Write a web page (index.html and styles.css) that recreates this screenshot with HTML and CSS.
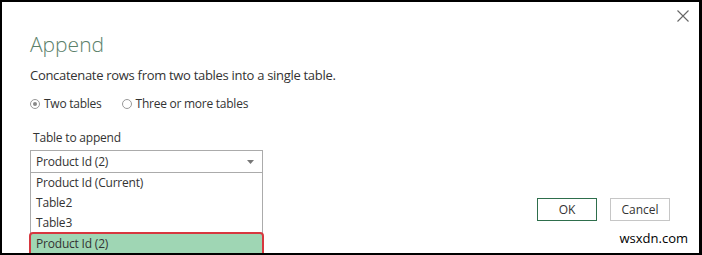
FILE: index.html
```html
<!DOCTYPE html>
<html lang="en">
<head>
    <meta charset="UTF-8">
    <title>Append</title>
    <link rel="stylesheet" href="styles.css">
</head>
<body>
    <div class="dialog">
        <button class="close" aria-label="Close">
            <svg width="12" height="12" viewBox="0 0 12 12"><path d="M0.5 0.5 L11.5 11.5 M11.5 0.5 L0.5 11.5" stroke="#666" stroke-width="1.1" fill="none"/></svg>
        </button>
        <h1 class="title">Append</h1>
        <p class="intro">Concatenate rows from two tables into a single table.</p>
        <div class="radios">
            <label class="radio"><span class="dot checked"></span>Two tables</label>
            <label class="radio"><span class="dot"></span>Three or more tables</label>
        </div>
        <div class="bottom">
            <div class="field">
                <div class="label">Table to append</div>
                <div class="select">
                    <span>Product Id (2)</span>
                    <svg width="7" height="4" viewBox="0 0 7 4"><path d="M0 0 H7 L3.5 4 Z" fill="#777"/></svg>
                </div>
                <ul class="options">
                    <li>Product Id (Current)</li>
                    <li>Table2</li>
                    <li>Table3</li>
                    <li class="picked">Product Id (2)</li>
                </ul>
            </div>
            <div class="actions">
                <div class="buttons">
                    <button class="btn primary">OK</button>
                    <button class="btn">Cancel</button>
                </div>
                <div class="mark">wsxdn.com</div>
            </div>
        </div>
    </div>
</body>
</html>
```

FILE: styles.css
```css
body {
    margin: 0;
    background-color: #000;
    font-family: "Open Sans", "Noto Sans", sans-serif;
    color: #333;
}
.dialog {
    position: relative;
    margin: 2px 3px 0 2px;
    height: 251px;
    background-color: #fff;
    overflow: hidden;
    padding: 0 0 0 28px;
    box-sizing: border-box;
}
.close {
    position: absolute;
    top: 8px;
    right: 10px;
    border: 0;
    background: none;
    padding: 0;
    line-height: 0;
}
.title {
    margin: 0;
    padding-top: 28px;
    font-size: 21px;
    font-weight: 300;
    color: #5b806a;
    line-height: 28px;
}
.intro {
    margin: 8px 0 0;
    font-size: 13px;
    line-height: 18px;
    letter-spacing: -0.3px;
}
.radios {
    display: flex;
    gap: 20px;
    margin-top: 12px;
    font-size: 12px;
    line-height: 16px;
    letter-spacing: -0.25px;
}
.radio {
    display: flex;
    align-items: center;
    gap: 4px;
}
.dot {
    width: 10px;
    height: 10px;
    border: 1px solid #999;
    border-radius: 50%;
    box-sizing: border-box;
    position: relative;
}
.dot.checked::after {
    content: "";
    position: absolute;
    left: 2px;
    top: 2px;
    width: 4px;
    height: 4px;
    border-radius: 50%;
    background-color: #888;
}
.bottom {
    display: flex;
    margin-top: 18px;
}
.field {
    width: 233px;
    font-size: 12px;
    letter-spacing: -0.2px;
}
.label {
    line-height: 16px;
    padding-left: 3px;
}
.select {
    margin-top: 4px;
    height: 21px;
    border: 1px solid #ababab;
    display: flex;
    align-items: center;
    justify-content: space-between;
    padding: 0 8px 0 5px;
}
.options {
    list-style: none;
    margin: 0;
    padding: 0;
    border: 1px solid #ababab;
    border-top: 0;
}
.options li {
    height: 20px;
    line-height: 20px;
    padding-left: 5px;
}
.options li.picked {
    height: 23px;
    line-height: 22px;
    background-color: #9fd6b4;
    outline: 2px solid #d7373f;
    outline-offset: -1px;
    border-radius: 3px;
    margin: 0 -1px;
    padding-left: 6px;
}
.actions {
    flex: 1;
    display: flex;
    flex-direction: column;
    align-items: flex-end;
    padding-right: 29px;
    padding-top: 68px;
}
.buttons {
    display: flex;
    gap: 13px;
}
.btn {
    width: 60px;
    height: 23px;
    border: 1px solid #c6c6c6;
    background-color: #fff;
    font-family: inherit;
    font-size: 12px;
    color: #333;
    padding: 0;
}
.btn.primary {
    border-color: #2e6e4c;
}
.mark {
    margin-top: 8px;
    margin-right: -18px;
    font-size: 13px;
    color: #000;
}
```
